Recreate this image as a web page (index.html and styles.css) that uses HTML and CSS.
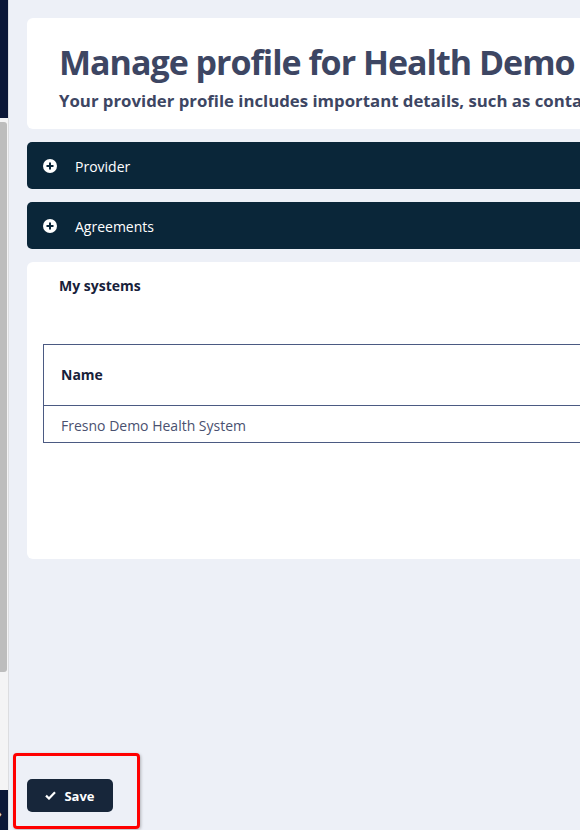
FILE: index.html
```html
<!DOCTYPE html>
<html lang="en">
  <head>
    <meta charset="UTF-8" />
    <meta name="viewport" content="width=device-width, initial-scale=1.0" />
    <title>Manage profile</title>
    <link rel="stylesheet" href="styles.css">
  </head>
  <body>
    <div class="sidebar">
      <div class="sidebar-top"></div>
      <div class="sidebar-scroll">
        <div class="scroll-thumb"></div>
      </div>
      <div class="sidebar-bottom">
        <span class="sidebar-arrow">&#8250;</span>
      </div>
    </div>
    <div class="main">
      <div class="content">
        <div class="card header-card">
          <h1 class="title">Manage profile for Health Demo</h1>
          <div class="subtitle">Your provider profile includes important details, such as contact information and agreements</div>
        </div>

        <div class="accordion">
          <span class="plus-icon">
            <svg width="14" height="14" viewBox="0 0 14 14">
              <circle cx="7" cy="7" r="7" fill="#fff" />
              <rect x="3.5" y="6" width="7" height="2" fill="#0a2639" />
              <rect x="6" y="3.5" width="2" height="7" fill="#0a2639" />
            </svg>
          </span>
          <span class="accordion-label">Provider</span>
        </div>
        <div class="accordion">
          <span class="plus-icon">
            <svg width="14" height="14" viewBox="0 0 14 14">
              <circle cx="7" cy="7" r="7" fill="#fff" />
              <rect x="3.5" y="6" width="7" height="2" fill="#0a2639" />
              <rect x="6" y="3.5" width="2" height="7" fill="#0a2639" />
            </svg>
          </span>
          <span class="accordion-label">Agreements</span>
        </div>

        <div class="card systems-card">
          <div class="systems-title">My systems</div>
          <table class="systems-table">
            <thead>
              <tr><th>Name</th></tr>
            </thead>
            <tbody>
              <tr><td>Fresno Demo Health System</td></tr>
            </tbody>
          </table>
        </div>
      </div>

      <div class="footer">
        <div class="highlight">
          <button class="save-button">
            <svg width="11" height="9" viewBox="0 0 11 9">
              <path d="M1 4.6 L4 7.5 L10 1.3" fill="none" stroke="#fff" stroke-width="2.2" />
            </svg>
            Save
          </button>
        </div>
      </div>
    </div>
  </body>
</html>
```

FILE: styles.css
```css
html, body {
  margin: 0;
  height: 100%;
}
body {
  display: flex;
  overflow: hidden;
  background: #edf0f7;
  font-family: "Open Sans", "Noto Sans", sans-serif;
}

.sidebar {
  width: 8px;
  flex-shrink: 0;
  display: flex;
  flex-direction: column;
  border-right: 1px solid #dcdde0;
  background: #f4f4f5;
}
.sidebar-top {
  height: 118px;
  background: #0b1736;
}
.sidebar-scroll {
  flex: 1;
  padding-top: 4px;
}
.scroll-thumb {
  width: 7px;
  height: 550px;
  background: #bdbdbd;
  border-radius: 0 3px 3px 0;
}
.sidebar-bottom {
  height: 40px;
  background: #0b1736;
  color: #fff;
  font-size: 12px;
  line-height: 1;
  display: flex;
  align-items: flex-end;
  padding-bottom: 10px;
  box-sizing: border-box;
  overflow: hidden;
}
.sidebar-arrow {
  margin-left: -2px;
}

.main {
  flex: 1;
  display: flex;
  flex-direction: column;
  min-width: 0;
}
.content {
  width: 760px;
  padding: 18px 0 0 18px;
}

.card {
  background: #fff;
  border-radius: 6px;
}
.header-card {
  height: 111px;
  box-sizing: border-box;
  padding: 22px 32px 0 32px;
  color: #3d4663;
}
.title {
  margin: 0;
  font-size: 34px;
  font-weight: 700;
  letter-spacing: -1px;
  line-height: 44px;
  white-space: nowrap;
}
.subtitle {
  margin-top: 7px;
  font-size: 16.8px;
  font-weight: 700;
  line-height: 20px;
  white-space: nowrap;
}

.accordion {
  margin-top: 13px;
  height: 47px;
  box-sizing: border-box;
  padding: 1px 0 0 16px;
  background: #0a2639;
  border-radius: 5px;
  display: flex;
  align-items: center;
  color: #fff;
}
.plus-icon {
  display: flex;
  width: 14px;
  height: 14px;
}
.accordion-label {
  margin-left: 18px;
  font-size: 14px;
}

.systems-card {
  margin-top: 13px;
  height: 297px;
  box-sizing: border-box;
  padding: 14px 0 0 16px;
}
.systems-title {
  padding-left: 16px;
  font-size: 14px;
  font-weight: 700;
  line-height: 20px;
  color: #17213a;
}
.systems-table {
  margin-top: 48px;
  width: 100%;
  border-collapse: collapse;
  border: 1px solid #4b5a82;
  font-size: 14px;
}
.systems-table th {
  text-align: left;
  height: 58px;
  padding: 0 0 2px 17px;
  font-weight: 700;
  color: #17213a;
  border-bottom: 1px solid #4b5a82;
}
.systems-table td {
  height: 34px;
  padding: 2px 0 0 17px;
  color: #4a5170;
}

.footer {
  margin-top: auto;
  padding: 0 0 1px 4px;
}
.highlight {
  box-sizing: border-box;
  width: 127px;
  height: 76px;
  border: 3px solid #ff0000;
  border-radius: 4px;
  box-shadow: 1px 1px 3px rgba(0, 0, 0, 0.25);
  padding: 23px 0 0 11px;
}
.save-button {
  width: 86px;
  height: 33px;
  border: none;
  border-radius: 5px;
  background: #17263a;
  color: #fff;
  font-family: "Open Sans", "Noto Sans", sans-serif;
  font-size: 13px;
  font-weight: 700;
  display: flex;
  align-items: center;
  justify-content: center;
  gap: 8px;
  padding: 0;
}
```
